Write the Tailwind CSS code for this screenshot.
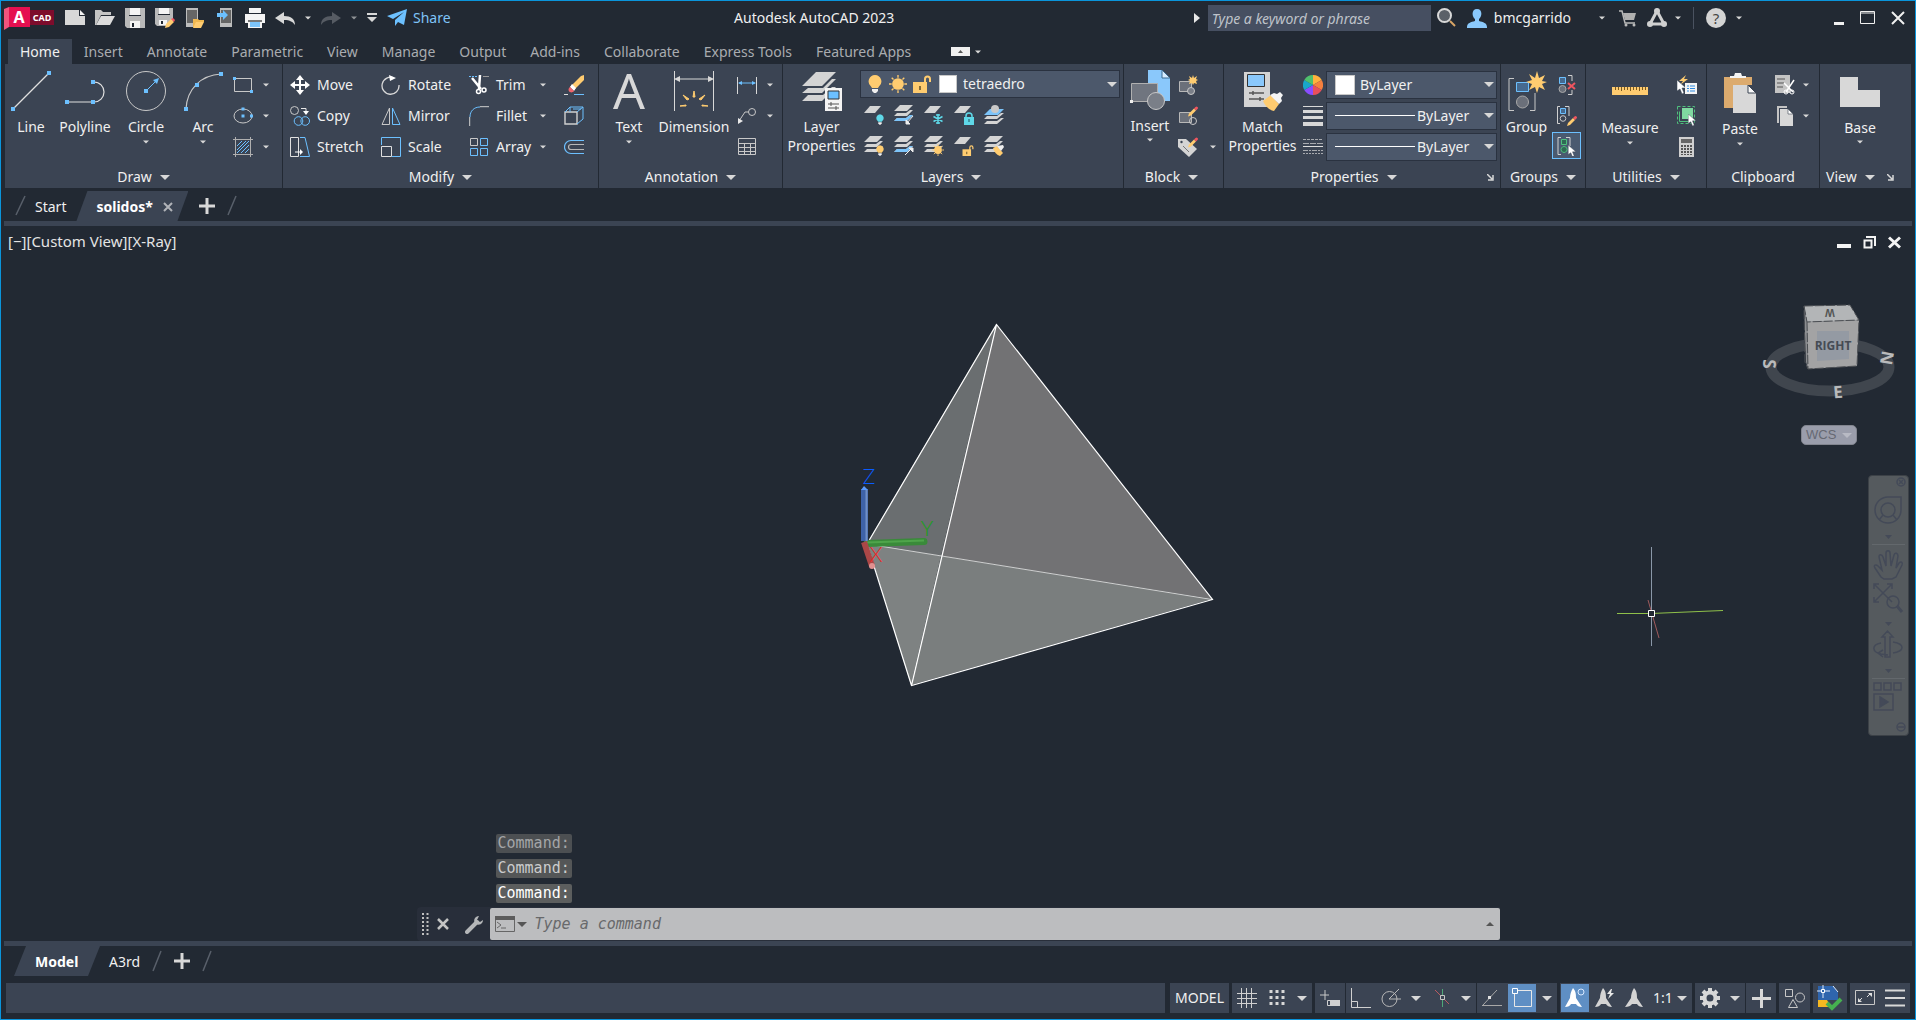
<!DOCTYPE html>
<html lang="en">
<head>
  <meta charset="UTF-8" />
  <title>Autodesk AutoCAD 2023</title>
  <script src="https://cdn.jsdelivr.net/npm/@tailwindcss/browser@4"></script>
</head>
<body class="bg-[#222933] font-['Noto_Sans','Open_Sans',sans-serif] text-[14px] leading-5 text-[#f0f0f0]">

  <!-- shared shapes -->
  <svg class="hidden">
    <symbol id="caret" viewBox="0 0 10 5"><path d="M0 0h10L5 5z" fill="#d8d8d8"/></symbol>
    <symbol id="sheets" viewBox="0 0 20 20"><path d="M6 0h13l-6 6H0zM3 8L0 11h13l6-6h-3l-4 3zM3 13L0 16h13l6-6h-3l-4 3z" fill="#d4d4d4"/></symbol>
    <symbol id="sheet" viewBox="0 0 20 20"><path d="M6 1h11l-6 7H0z" fill="#d4d4d4"/></symbol>
    <symbol id="bulb" viewBox="0 0 14 18"><path d="M7 0a6.500 6.500 0 0 1 4 11.500L10 13H4L3 11.500A6.500 6.500 0 0 1 7 0z" fill="currentColor"/><path d="M4 14h6v2l-2 2H6l-2-2z" fill="#f0f0f0"/></symbol>
    <symbol id="sun" viewBox="0 0 20 20"><circle cx="10" cy="10" r="6.500" fill="#ffcc70"/><path d="M10 0v3M10 17v3M0 10h3M17 10h3M3 3l2 2M15 15l2 2M17 3l-2 2M5 15l-2 2" stroke="#ffcc70" stroke-width="1.500"/></symbol>
    <symbol id="lock-open" viewBox="0 0 18 18"><path d="M12 8V4a2.500 2.500 0 0 1 5 0v3" fill="none" stroke="#ffcc70" stroke-width="2"/><path d="M0 7h14v11H0z" fill="#ffcc70"/><path d="M7 11v4" stroke="#5b4a25" stroke-width="1.500"/></symbol>
    <symbol id="cursor" viewBox="0 0 10 14"><path d="M0 0v11l3-2 2 5 2-1-2-5h4z" fill="#fff" stroke="#3b4453" stroke-width=".5"/></symbol>
    <symbol id="pencil" viewBox="0 0 10 10"><path d="M0 10l1-3 5-5 2 2-5 5z" fill="#ffcc70"/><path d="M6 2l1.500-1.500a1 1 0 0 1 2 2L8 4z" fill="#f0555f"/></symbol>
  </svg>

  <div class="flex h-screen min-h-[700px] w-full flex-col overflow-hidden border border-[#0a95dc] pb-1.5">

    <!-- Title bar -->
    <header class="flex h-[38px] shrink-0 items-center pb-1 pl-[3px] pr-2.5">
      <svg class="h-[23px] w-[50px] shrink-0 overflow-visible" viewBox="0 0 50 23">
        <path d="M0 2l5-2v20l-5 3z" fill="#f2547d"/><path d="M5 0h21v20H5z" fill="#e51050"/><path d="M26 3h24v15H26z" fill="#7d0c2c"/>
        <text x="15" y="16" text-anchor="middle" font-size="16" font-weight="700" fill="#fff">A</text>
        <text x="38" y="14" text-anchor="middle" font-size="9" font-weight="700" fill="#fff">CAD</text>
      </svg>
      <nav class="ml-[11px] flex items-center gap-2.5" aria-label="Quick access">
        <button aria-label="New"><svg class="size-5" viewBox="0 0 20 20"><path d="M0 2h14v6h6v9H0z" fill="#d8d8d8"/><path d="M15 2l5 5h-5z" fill="#f4f4f4"/></svg></button>
        <button aria-label="Open"><svg class="size-5" viewBox="0 0 20 20"><path d="M0 2h6l2 2h8v3H6L1 17H0z" fill="#c4c4c4"/><path d="M6 8h14l-5 9H1z" fill="#dcdcdc"/></svg></button>
        <button aria-label="Save"><svg class="size-5" viewBox="0 0 20 20"><path d="M0 0h20v20H2l-2-2z" fill="#b9b9b9"/><path d="M5 0h10v7H5z" fill="#f4f4f4"/><path d="M5 13h10v7H5z" fill="#f4f4f4"/><path d="M4 7h12v1H4zM7 15h2v4H7z" fill="#222933"/></svg></button>
        <button aria-label="Save as"><svg class="size-5" viewBox="0 0 20 20"><path d="M0 0h18v14l-4 4H2l-2-2z" fill="#b9b9b9"/><path d="M4 0h10v6H4z" fill="#f4f4f4"/><path d="M4 12h8v5H4z" fill="#f4f4f4"/><path d="M6 13h2v3H6zM3 6h12v1H3z" fill="#222933"/><path d="M10 20l1-4 5-5 3 3-5 5z" fill="#ffcc70"/><path d="M16 11l2-1 2 2-1 2z" fill="#f0555f"/></svg></button>
        <button aria-label="Open from mobile"><svg class="size-5" viewBox="0 0 20 20"><path d="M1 0h12v19H1z" fill="#bdbdbd"/><path d="M2 2h10v13H2z" fill="#666"/><path d="M8 11h5l1 1h5v2h-7l-4 6z" fill="#f0b850"/><path d="M11 14h8l-3 6H8z" fill="#ffcc70"/></svg></button>
        <button aria-label="Save to mobile"><svg class="size-5" viewBox="0 0 20 20"><path d="M5 0h12v19H5z" fill="#bdbdbd"/><path d="M6 2h10v13H6z" fill="#666"/><path d="M2 5h6V2l5 5-5 5V9H2z" fill="#6cc0ff"/></svg></button>
        <button aria-label="Plot"><svg class="size-5" viewBox="0 0 20 20"><path d="M4 0h12v5H4zM0 6h20v9H0z" fill="#f4f4f4"/><path d="M3 12h14v8H3z" fill="#f4f4f4"/><path d="M3 12h14v2H3z" fill="#777"/><path d="M5 14h10v5H5z" fill="#7cc4fa"/></svg></button>
        <button aria-label="Undo" class="flex items-center gap-2.5"><svg class="h-5 w-5" viewBox="0 0 20 20"><path d="M0 10l9-6v4c7 0 11 3 11 9-2-3-5-5-11-5v4z" fill="#d8d8d8"/></svg><svg class="h-1 w-1.5"><use href="#caret"/></svg></button>
        <button aria-label="Redo" class="flex items-center gap-2.5"><svg class="h-5 w-5" viewBox="0 0 20 20"><path d="M20 10l-9-6v4C4 8 0 11 0 17c2-3 5-5 11-5v4z" fill="#565b63"/></svg><svg class="h-1 w-1.5 opacity-60"><use href="#caret"/></svg></button>
        <button aria-label="Customize"><svg class="h-5 w-2.5" viewBox="0 0 10 20"><path d="M0 5h10v2H0zM0 9h10l-5 5z" fill="#d8d8d8"/></svg></button>
        <button class="flex items-center gap-1.5 text-[#7fc4f8]"><svg class="size-5" viewBox="0 0 20 20"><path d="M0 8L20 1 17 17l-6-3-3 4v-6l9-8L6 11z" fill="#6cc0ff"/></svg>Share</button>
      </nav>
      <h1 class="flex-1 pr-4 text-center">Autodesk AutoCAD 2023</h1>
      <svg class="mr-2 h-2.5 w-1.5" viewBox="0 0 6 10"><path d="M0 0l6 5-6 5z" fill="#e8e8e8"/></svg>
      <input type="text" aria-label="Search" placeholder="Type a keyword or phrase" class="h-[26px] w-[223px] bg-[#464f61] px-1 text-[14px] italic placeholder:text-[#bfc3ca]" />
      <button aria-label="Search" class="ml-1.5"><svg class="size-5" viewBox="0 0 20 20"><circle cx="7.500" cy="7.500" r="6.500" fill="#5b6068" stroke="#d8d8d8" stroke-width="2"/><path d="M13 13l5 5" stroke="#d9a566" stroke-width="2"/></svg></button>
      <button class="ml-2.5 flex items-center gap-[7px]"><svg class="size-5" viewBox="0 0 20 20"><path d="M10 1c6 0 5 8 2 10v2c4 1 8 2 8 6v1H0v-1c0-4 4-5 8-6v-2C5 9 4 1 10 1z" fill="#8ac8fb"/></svg>bmcgarrido</button>
      <svg class="ml-7 h-1 w-1.5"><use href="#caret"/></svg>
      <button aria-label="Store" class="ml-3.5"><svg class="h-5 w-[18px]" viewBox="0 0 18 20"><path d="M0 3h3l3 12h10" fill="none" stroke="#b9b9b9" stroke-width="1.500"/><path d="M4 5h13l-2 7H6z" fill="#b0b0b0"/><circle cx="7" cy="17" r="1.500" fill="#b9b9b9"/><circle cx="15" cy="17" r="1.500" fill="#b9b9b9"/></svg></button>
      <button aria-label="Autodesk App Store" class="ml-2.5 flex items-center gap-2"><svg class="size-5" viewBox="0 0 20 20"><path d="M10 3L3 16h14z" fill="none" stroke="#d0d0d0" stroke-width="3"/><g fill="#d0d0d0"><circle cx="10" cy="3" r="3"/><circle cx="3" cy="16" r="3"/><circle cx="17" cy="16" r="3"/></g></svg><svg class="h-1 w-1.5"><use href="#caret"/></svg></button>
      <span class="mx-3 h-[22px] w-px bg-[#4a5260]"></span>
      <button aria-label="Help" class="flex items-center gap-2.5"><span class="flex size-5 items-center justify-center rounded-full bg-[#d4d4d4] text-[15px] text-[#444]">?</span><svg class="h-1 w-1.5"><use href="#caret"/></svg></button>
      <div class="ml-[92px] flex items-center gap-4">
        <button aria-label="Minimize"><svg class="h-4 w-2.5"><path d="M0 12h10v3H0z" fill="#f0f0f0"/></svg></button>
        <button aria-label="Maximize"><svg class="h-4 w-[15px]"><path d="M.5 1.500h14v12H.5zM0 3h15" fill="none" stroke="#f0f0f0"/></svg></button>
        <button aria-label="Close"><svg class="h-4 w-[14px]"><path d="M1 2l12 12M13 2L1 14" stroke="#f0f0f0" stroke-width="2"/></svg></button>
      </div>
    </header>

    <!-- Ribbon tabs -->
    <nav class="flex h-[25px] shrink-0 items-center pl-[7px] text-[#a9acb0]">
      <a href="#" class="flex h-full items-center bg-[#3b4453] px-3 text-[#f0f0f0]">Home</a>
      <a href="#" class="px-3">Insert</a>
      <a href="#" class="px-3">Annotate</a>
      <a href="#" class="px-3">Parametric</a>
      <a href="#" class="px-3">View</a>
      <a href="#" class="px-3">Manage</a>
      <a href="#" class="px-3">Output</a>
      <a href="#" class="px-3">Add-ins</a>
      <a href="#" class="px-3">Collaborate</a>
      <a href="#" class="px-3">Express Tools</a>
      <a href="#" class="px-3">Featured Apps</a>
      <button aria-label="Minimize ribbon" class="ml-7 flex items-center gap-[5px]"><svg class="h-[9px] w-[19px]"><path d="M0 0h19v9H0z" fill="#f0f0f0"/><path d="M7 6h5l-2.500-3z" fill="#555"/></svg><svg class="h-1 w-1.5"><use href="#caret"/></svg></button>
    </nav>

    <!-- Ribbon -->
    <main class="mx-1 flex h-[124px] shrink-0 bg-[#3b4453]">

      <section class="flex w-[278px] shrink-0 flex-col border-r border-[#222933]">
        <div class="flex flex-1 pl-0.5 pt-[5px]">
          <button class="flex w-12 flex-col items-center pt-0.5"><svg class="size-10 shrink-0" viewBox="0 0 40 40"><path d="M2 38L38 2" stroke="#e0e0e0" stroke-width="1.200"/><path d="M0 36h4v4H0zM36 0h4v4h-4z" fill="#6cc0ff"/></svg><span class="mt-1.5">Line</span></button>
          <button class="flex w-[60px] flex-col items-center pt-0.5"><svg class="size-10 shrink-0" viewBox="0 0 40 40"><path d="M2 31h27a10 10 0 0 0 0-20" fill="none" stroke="#e0e0e0" stroke-width="1.200"/><path d="M0 29h4v4H0zM26 29h4v4h-4zM26 9h4v4h-4z" fill="#6cc0ff"/></svg><span class="mt-1.5">Polyline</span></button>
          <button class="flex w-[62px] flex-col items-center pt-0.5"><svg class="size-10 shrink-0" viewBox="0 0 40 40"><circle cx="20" cy="20" r="19.500" fill="none" stroke="#c8c8c8"/><path d="M20 20L31 9" stroke="#6cc0ff"/><path d="M18 18h4v4h-4zM33 7l-6 2 4 4z" fill="#6cc0ff"/></svg><span class="mt-1.5">Circle</span><svg class="mt-[3px] h-1 w-1.5"><use href="#caret"/></svg></button>
          <button class="flex w-[52px] flex-col items-center pt-0.5"><svg class="size-10 shrink-0" viewBox="0 0 40 40"><path d="M3 38C4 18 18 4 38 3" fill="none" stroke="#c8c8c8" stroke-width="1.200"/><path d="M1 36h4v4H1zM12 12h4v4h-4zM36 1h4v4h-4z" fill="#6cc0ff"/></svg><span class="mt-1.5">Arc</span><svg class="mt-[3px] h-1 w-1.5"><use href="#caret"/></svg></button>
          <div class="flex flex-col pl-1">
            <button aria-label="Rectangle" class="flex h-[31px] items-center gap-2.5"><svg class="size-5" viewBox="0 0 20 20"><path d="M1.500 3.500h17v13h-17z" fill="none" stroke="#c8c8c8"/><path d="M0 2h3v3H0zM17 15h3v3h-3z" fill="#6cc0ff"/></svg><svg class="h-1 w-1.5"><use href="#caret"/></svg></button>
            <button aria-label="Ellipse" class="flex h-[31px] items-center gap-2.5"><svg class="size-5" viewBox="0 0 20 20"><ellipse cx="10" cy="10" rx="9" ry="7" fill="none" stroke="#c8c8c8"/><path d="M8.500 1.500h3v3h-3zM8.500 8.500h3v3h-3zM17 8.500h3v3h-3z" fill="#6cc0ff"/></svg><svg class="h-1 w-1.5"><use href="#caret"/></svg></button>
            <button aria-label="Hatch" class="flex h-[31px] items-center gap-2.5"><svg class="size-5" viewBox="0 0 20 20"><path d="M0 2.500h20M0 17.500h20M2.500 0v20M17.500 0v20" stroke="#b0b0b0"/><path d="M4 9l5-5M4 13l9-9M4 16L16 4M8 16l8-8M12 16l4-4" stroke="#6cc0ff"/></svg><svg class="h-1 w-1.5"><use href="#caret"/></svg></button>
          </div>
        </div>
        <button class="flex h-[26px] items-center justify-center gap-2 pt-1">Draw <svg class="h-[5px] w-2.5"><use href="#caret"/></svg></button>
      </section>

      <section class="flex w-[316px] shrink-0 flex-col border-r border-[#222933]">
        <div class="grid flex-1 auto-rows-[31px] grid-cols-[91px_88px_95px_20px] pl-[7px] pt-[5px]">
          <button class="flex items-center gap-[7px]"><svg class="size-5" viewBox="0 0 20 20"><path d="M10 0l4 5h-3v4h4V6l5 4-5 4v-3h-4v4h3l-4 5-4-5h3v-4H5v3l-5-4 5-4v3h4V5H6z" fill="#fff"/></svg>Move</button>
          <button class="flex items-center gap-[7px]"><svg class="size-5" viewBox="0 0 20 20"><path d="M13 3a8.500 8.500 0 1 0 5 7" fill="none" stroke="#d8d8d8" stroke-width="1.300"/><path d="M8 0l7 3-6 3z" fill="#fff"/></svg>Rotate</button>
          <button class="flex items-center gap-[7px]"><svg class="size-5" viewBox="0 0 20 20"><path d="M0 1.500h9" stroke="#6cc0ff" stroke-dasharray="2 1"/><path d="M14 1.500h6" stroke="#999"/><path d="M3 3l9 11M11 0l-1 14" stroke="#fff" stroke-width="2.500"/><circle cx="9.500" cy="16.500" r="2" fill="none" stroke="#fff" stroke-width="1.500"/><circle cx="15" cy="15" r="2" fill="none" stroke="#fff" stroke-width="1.500"/></svg>Trim<svg class="ml-auto mr-[18px] h-1 w-1.5"><use href="#caret"/></svg></button>
          <button aria-label="Erase"><svg class="size-5" viewBox="0 0 20 20"><path d="M20 0v5L10 15l-4-3L17 1z" fill="#ffcc70"/><path d="M8 9l4 4-2 3-4-4z" fill="#fff"/><path d="M6 12l4 4c-2 3-7 1-5-3z" fill="#f0656c"/><path d="M0 19.500h4" stroke="#e0e0e0"/><path d="M10 19.500h10" stroke="#6cc0ff"/></svg></button>
          <button class="flex items-center gap-[7px]"><svg class="size-5" viewBox="0 0 20 20"><circle cx="4.500" cy="4.500" r="4" fill="none" stroke="#c8c8c8"/><path d="M11 2.500h5V6" fill="none" stroke="#e8e8e8"/><path d="M13 5h6l-3 4z" fill="#fff"/><circle cx="8.500" cy="15" r="4.300" fill="none" stroke="#6cc0ff"/><circle cx="15.200" cy="15" r="4.300" fill="none" stroke="#6cc0ff"/></svg>Copy</button>
          <button class="flex items-center gap-[7px]"><svg class="size-5" viewBox="0 0 20 20"><path d="M8.500 2v16.500H1z" fill="none" stroke="#c8c8c8"/><path d="M11.500 2v16.500H19z" fill="none" stroke="#6cc0ff"/></svg>Mirror</button>
          <button class="flex items-center gap-[7px]"><svg class="size-5" viewBox="0 0 20 20"><path d="M1 11C1 5 5 1 11 1" fill="none" stroke="#6cc0ff"/><path d="M.7 11v9M11 .7h9" stroke="#d0d0d0"/></svg>Fillet<svg class="ml-auto mr-[18px] h-1 w-1.5"><use href="#caret"/></svg></button>
          <button aria-label="Solid"><svg class="size-5" viewBox="0 0 20 20"><path d="M1 6h12v12H1z" fill="none" stroke="#d0d0d0" stroke-width="1.400"/><path d="M1 6l5-5h13v12l-6 5M13 6l6-5M6 1v5M9 3h8" fill="none" stroke="#6cc0ff"/></svg></button>
          <button class="flex items-center gap-[7px]"><svg class="size-5" viewBox="0 0 20 20"><path d="M.5.5h8v19h-8z" fill="none" stroke="#e0e0e0"/><path d="M10 .5h5l4.500 19H10" fill="none" stroke="#6cc0ff"/><path d="M5 15h6" stroke="#fff"/><path d="M10 12l3 3-3 3z" fill="#fff"/></svg>Stretch</button>
          <button class="flex items-center gap-[7px]"><svg class="size-5" viewBox="0 0 20 20"><path d="M.5 8V.500h19v19H11" fill="none" stroke="#6cc0ff"/><path d="M.5 9.500h10v10H.5z" fill="none" stroke="#e0e0e0"/></svg>Scale</button>
          <button class="flex items-center gap-[7px]"><svg class="size-5" viewBox="0 0 20 20"><path d="M1.500 1.500h7v7h-7z" fill="none" stroke="#c8c8c8"/><path d="M11.500 1.500h7v7h-7zM1.500 11.500h7v7h-7zM11.500 11.500h7v7h-7z" fill="none" stroke="#6cc0ff"/></svg>Array<svg class="ml-auto mr-[18px] h-1 w-1.5"><use href="#caret"/></svg></button>
          <button aria-label="Offset"><svg class="size-5" viewBox="0 0 20 20"><path d="M20 3.500H7a6.500 6.500 0 0 0 0 13h13" fill="none" stroke="#6cc0ff" stroke-width="1.200"/><path d="M20 7.500H7a2.500 2.500 0 0 0 0 5h13" fill="none" stroke="#b8b8b8" stroke-width="1.200"/></svg></button>
        </div>
        <button class="flex h-[26px] items-center justify-center gap-2 pt-1">Modify <svg class="h-[5px] w-2.5"><use href="#caret"/></svg></button>
      </section>

      <section class="flex w-[184px] shrink-0 flex-col border-r border-[#222933]">
        <div class="flex flex-1 pl-1 pt-[5px]">
          <button class="flex w-[52px] flex-col items-center pt-0.5"><svg class="size-10 shrink-0 overflow-visible" viewBox="0 0 40 40"><text x="20" y="38" text-anchor="middle" font-size="50" fill="#d8d8d8">A</text></svg><span class="mt-1.5">Text</span><svg class="mt-[3px] h-1 w-1.5"><use href="#caret"/></svg></button>
          <button class="flex w-[78px] flex-col items-center pt-0.5"><svg class="size-10 shrink-0" viewBox="0 0 40 40"><path d="M.5 0v40M39.500 0v40M2 8h36" stroke="#d8d8d8"/><path d="M0 8l6-3v6zM40 8l-6-3v6z" fill="#d8d8d8"/><path d="M19 26l1-6 1 6zM13 29l-4-5 6 4zM27 29l4-5-6 4zM6 35l6-1v1zM34 35l-6-1v1z" fill="#ffcc70" stroke="#ffcc70"/></svg><span class="mt-1.5">Dimension</span></button>
          <div class="flex flex-col pl-1">
            <button aria-label="Linear" class="flex h-[31px] items-center gap-2.5"><svg class="size-5" viewBox="0 0 20 20"><path d="M.5 2v17M19.500 2v17" stroke="#d8d8d8"/><path d="M2 8h16" stroke="#6cc0ff"/><path d="M1 8l4-2v4zM19 8l-4-2v4z" fill="#6cc0ff"/></svg><svg class="h-1 w-1.5"><use href="#caret"/></svg></button>
            <button aria-label="Leader" class="flex h-[31px] items-center gap-2.5"><svg class="size-5" viewBox="0 0 20 20"><circle cx="15" cy="6" r="3.500" fill="none" stroke="#c8c8c8"/><path d="M11.500 6H8l-6 9" fill="none" stroke="#c8c8c8"/><path d="M1 12l5 3-5 3z" fill="#e8e8e8"/></svg><svg class="h-1 w-1.5"><use href="#caret"/></svg></button>
            <button aria-label="Table" class="flex h-[31px] items-center"><svg class="size-5" viewBox="0 0 20 20"><path d="M1.500 1.500h17v16h-17zM1 6.500h18M1 10.500h18M1 14.500h18M7.500 6v11M13.500 6v11" fill="none" stroke="#c8c8c8"/></svg></button>
          </div>
        </div>
        <button class="flex h-[26px] items-center justify-center gap-2 pt-1">Annotation <svg class="h-[5px] w-2.5"><use href="#caret"/></svg></button>
      </section>

      <section class="flex w-[341px] shrink-0 flex-col border-r border-[#222933]">
        <div class="flex flex-1 pt-[5px]">
          <button class="flex w-[77px] flex-col items-center pt-0.5"><svg class="size-10 shrink-0" viewBox="0 0 40 40"><path d="M14 1h20L20 15H0zM6 17l-6 5h20L34 8h-4L21 17zM6 24l-6 6h20l14-14h-4l-9 8z" fill="#d4d4d4"/><path d="M23 17h17v23H23z" fill="#f4f4f4"/><path d="M26 20h11v8H26z" fill="#6cc0ff" stroke="#333"/><path d="M26 33h11M26 37h11M29 31v4M34 35v4" stroke="#555"/></svg><span class="mt-1.5">Layer</span><span class="-mt-px">Properties</span></button>
          <div class="flex flex-col pt-px">
            <label class="flex h-7 w-[260px] items-center border border-[#2a3240] bg-[#4c586b] pl-[7px] pr-0.5">
              <svg class="h-[18px] w-[14px] text-[#ffcc70]"><use href="#bulb"/></svg>
              <svg class="ml-[7px] size-[18px]"><use href="#sun"/></svg>
              <svg class="ml-1.5 size-[18px]"><use href="#lock-open"/></svg>
              <span class="ml-2 size-[18px] border border-[#c8c8c8] bg-white"></span>
              <select aria-label="Layer" class="ml-1.5 flex-1 appearance-none bg-transparent"><option>tetraedro</option></select>
              <svg class="h-[5px] w-2.5"><use href="#caret"/></svg>
            </label>
            <div class="flex h-[34px] items-center gap-2.5 pl-1">
              <button aria-label="Off"><svg class="size-5"><use href="#sheet"/><use href="#bulb" x="12" y="9" width="8" height="11" color="#5fd8e8"/></svg></button>
              <button aria-label="Isolate"><svg class="size-5"><use href="#sheets"/><path d="M3 13l-3 3h13l6-6h-3l-4 3z" fill="#7cc4fa"/><path d="M19 11l-6 7M12 15v4h4z" stroke="#eee" fill="#eee"/></svg></button>
              <button aria-label="Freeze"><svg class="size-5"><use href="#sheet"/><path d="M14 9v10M9.500 11.500l9 5M9.500 16.500l9-5M12 10h4M12 18h4" stroke="#5fd8e8" stroke-width="1.500"/></svg></button>
              <button aria-label="Lock"><svg class="size-5"><use href="#sheet"/><path d="M12 13v-2a3 3 0 0 1 6 0v2" fill="none" stroke="#5fd8e8" stroke-width="1.500"/><path d="M10 12h10v8H10z" fill="#5fd8e8"/><path d="M15 14v3" stroke="#24505a"/></svg></button>
              <button aria-label="Make current"><svg class="size-5"><path d="M6 4h14l-6 6H0z" fill="#7cc4fa"/><path d="M3 11l-3 3h13l7-6h-3l-4 3zM3 16l-3 3h13l7-6h-3l-4 3z" fill="#d4d4d4"/><circle cx="11" cy="4" r="4" fill="#c8c8c8"/></svg></button>
            </div>
            <div class="flex h-7 items-center gap-2.5 pl-1">
              <button aria-label="All on"><svg class="size-5"><use href="#sheets"/><use href="#bulb" x="12" y="9" width="8" height="11" color="#ffcc70"/></svg></button>
              <button aria-label="Unisolate"><svg class="size-5"><use href="#sheets"/><path d="M3 13l-3 3h13l6-6h-3l-4 3z" fill="#7cc4fa"/><path d="M11 19l7-7M15 12h4v4z" stroke="#eee" fill="#eee"/></svg></button>
              <button aria-label="Thaw"><svg class="size-5"><use href="#sheets"/><use href="#sun" x="8" y="8" width="12" height="12"/></svg></button>
              <button aria-label="Unlock"><svg class="size-5"><use href="#sheet"/><use href="#lock-open" x="8" y="9" width="12" height="11"/></svg></button>
              <button aria-label="Match layer"><svg class="size-5"><use href="#sheets"/><path d="M9 12l4-2 6 7-3 3c-3-1-6-4-7-8z" fill="#ffcc70"/><path d="M13 10l6-1 1 2-3 4z" fill="#f0f0f0"/></svg></button>
            </div>
          </div>
        </div>
        <button class="flex h-[26px] items-center justify-center gap-2 pr-1 pt-1">Layers <svg class="h-[5px] w-2.5"><use href="#caret"/></svg></button>
      </section>

      <section class="flex w-[100px] shrink-0 flex-col border-r border-[#222933]">
        <div class="flex flex-1 pt-[5px]">
          <button class="flex w-[52px] flex-col items-center pt-px"><svg class="size-10 shrink-0" viewBox="0 0 40 40"><path d="M18 0h14l8 8v23H18z" fill="#8ac8fb"/><path d="M32 0v8h8z" fill="#d6ecff" stroke="#3b6a90"/><path d="M1.500 13.500h26v18h-26z" fill="#70757f" stroke="#b0b0b0"/><circle cx="26" cy="31" r="8.500" fill="#7a7f88" stroke="#c8c8c8"/><path d="M0 30h3v3H0z" fill="#eee"/></svg><span class="mt-1.5">Insert</span><svg class="mt-0.5 h-1 w-1.5"><use href="#caret"/></svg></button>
          <div class="flex flex-col pl-0.5">
            <button aria-label="Create block" class="flex h-[31px] items-center"><svg class="size-5"><path d="M1.500 6.500h12v10h-12z" fill="#6b707a" stroke="#b8b8b8"/><circle cx="13" cy="16" r="3.500" fill="#7a7f88" stroke="#c8c8c8"/><path d="M15 0l1 3 3-2-1 3 2 1-2 1 1 3-3-1-1 2-1-2-3 1 1-3-2-1 2-1-1-3 3 2z" fill="#ffcc70"/></svg></button>
            <button aria-label="Edit block" class="flex h-[31px] items-center"><svg class="size-5"><path d="M1.500 6.500h12v10h-12z" fill="#6b707a" stroke="#b8b8b8"/><circle cx="15" cy="15" r="3.500" fill="none" stroke="#c8c8c8"/><use href="#pencil" x="10" y="0" width="10" height="11"/></svg></button>
            <button aria-label="Edit attributes" class="flex h-[31px] items-center gap-3"><svg class="size-5"><path d="M0 2l8 0 11 10-8 8L0 10z" fill="#d4d4d4"/><path d="M5 9l6 6" stroke="#777"/><circle cx="3.500" cy="5" r="1.200" fill="#3b4453"/><use href="#pencil" x="10" y="0" width="10" height="11"/></svg><svg class="h-1 w-1.5"><use href="#caret"/></svg></button>
          </div>
        </div>
        <button class="flex h-[26px] items-center justify-center gap-2 pr-1 pt-1">Block <svg class="h-[5px] w-2.5"><use href="#caret"/></svg></button>
      </section>

      <section class="flex w-[277px] shrink-0 flex-col border-r border-[#222933]">
        <div class="flex flex-1 pt-[5px]">
          <button class="flex w-[77px] flex-col items-center pt-0.5"><svg class="size-10 shrink-0" viewBox="0 0 40 40"><path d="M1 1h26v35H1z" fill="#d4d4d4"/><path d="M4.500 3.500h17v12h-17z" fill="#8ac8fb" stroke="#333"/><path d="M6 22h15M6 28h15M10 20v4M17 26v4" stroke="#555" stroke-width="1.500"/><path d="M20 30l8-6 8 9-5 7c-5-1-9-5-11-10z" fill="#ffcc70"/><path d="M27 24l4-2 3 1 3-2 3 3-2 3 1 3-3 3z" fill="#f4f4f4"/></svg><span class="mt-1.5">Match</span><span class="-mt-px">Properties</span></button>
          <div class="grid grid-cols-[23px_171px] auto-rows-[31px] items-center pl-0.5">
            <svg class="size-5" viewBox="-10 -10 20 20"><path d="M0 0V-10A10 10 0 0 1 8.700-5z" fill="#ffb13d"/><path d="M0 0l8.700-5a10 10 0 0 1 0 10z" fill="#f5803e"/><path d="M0 0l8.700 5A10 10 0 0 1 0 10z" fill="#e8505b"/><path d="M0 0v10a10 10 0 0 1-8.700-5z" fill="#8a4dff"/><path d="M0 0l-8.700 5a10 10 0 0 1 0-10z" fill="#19a7c9"/><path d="M0 0l-8.700-5A10 10 0 0 1 0-10z" fill="#4fc06d"/></svg>
            <label class="flex h-7 items-center border border-[#2a3240] bg-[#4c586b] pl-2 pr-0.5"><span class="size-5 border border-[#c8c8c8] bg-white"></span><select aria-label="Object color" class="ml-[5px] flex-1 appearance-none bg-transparent"><option>ByLayer</option></select><svg class="h-[5px] w-2.5"><use href="#caret"/></svg></label>
            <svg class="size-5"><path d="M0 0h20v1H0zM0 4h20v3H0zM0 10h20v3H0zM0 16h20v4H0z" fill="#d8d8d8"/></svg>
            <label class="flex h-7 items-center border border-[#2a3240] bg-[#4c586b] pl-2 pr-0.5"><span class="h-px w-20 bg-white"></span><select aria-label="Lineweight" class="ml-0.5 flex-1 appearance-none bg-transparent"><option>ByLayer</option></select><svg class="h-[5px] w-2.5"><use href="#caret"/></svg></label>
            <svg class="size-5" stroke="#a8abb0"><path d="M0 2.500h20" stroke-dasharray="3 1"/><path d="M0 6.500h20" stroke-dasharray="6 1"/><path d="M0 9.500h20" stroke="#ddd"/><path d="M0 13.500h20" stroke-dasharray="5 1 2 1"/><path d="M0 16.500h20" stroke-dasharray="2 1"/></svg>
            <label class="flex h-7 items-center border border-[#2a3240] bg-[#4c586b] pl-2 pr-0.5"><span class="h-px w-20 bg-white"></span><select aria-label="Linetype" class="ml-0.5 flex-1 appearance-none bg-transparent"><option>ByLayer</option></select><svg class="h-[5px] w-2.5"><use href="#caret"/></svg></label>
          </div>
        </div>
        <div class="flex h-[26px] items-center pr-1.5 pt-1">
          <button class="flex flex-1 items-center justify-center gap-2 pr-1">Properties <svg class="h-[5px] w-2.5"><use href="#caret"/></svg></button>
          <button aria-label="Open properties"><svg class="size-[7px]"><path d="M0 0l5 5M6 1v5H1" fill="none" stroke="#d8d8d8" stroke-width="1.500"/></svg></button>
        </div>
      </section>

      <section class="flex w-[85px] shrink-0 flex-col border-r border-[#222933]">
        <div class="flex flex-1 pt-[5px]">
          <button class="flex w-[51px] flex-col items-center pt-0.5"><svg class="size-10 shrink-0" viewBox="0 0 40 40"><path d="M7 7.500H2v32h5M23 39.500h5V22" fill="none" stroke="#c8c8c8"/><path d="M9.500 11.500h12v9h-12z" fill="#466a8f" stroke="#6cc0ff"/><circle cx="15.500" cy="31" r="6" fill="#6b707a" stroke="#a8a8a8"/><path d="M30 0l2 7 6-3-3 6 5 1-5 2 3 6-6-3-2 6-2-6-6 3 3-6-6-2 6-2-3-6 6 4z" fill="#ffcc70"/></svg><span class="mt-1.5">Group</span></button>
          <div class="flex flex-col items-center">
            <button aria-label="Ungroup" class="flex h-[31px] items-center"><svg class="size-5"><path d="M2.500 2.500h6v6h-6z" fill="#466a8f" stroke="#6cc0ff"/><circle cx="5.500" cy="14" r="3.500" fill="#6b707a" stroke="#a8a8a8"/><path d="M11 .5h4V6M11 19.500h4V15" fill="none" stroke="#d0d0d0"/><path d="M11 8l7 6M18 8l-7 6" stroke="#f0555f" stroke-width="2"/></svg></button>
            <button aria-label="Group edit" class="flex h-[31px] items-center"><svg class="size-5"><path d="M3 .5H.5v17H3M8 .5h4V10" fill="none" stroke="#d0d0d0"/><path d="M3.500 2.500h5v5h-5z" fill="#466a8f" stroke="#6cc0ff"/><circle cx="6" cy="12.500" r="2.800" fill="none" stroke="#c8c8c8"/><use href="#pencil" x="10" y="10" width="10" height="10"/></svg></button>
            <button aria-label="Group selection" aria-pressed="true" class="mt-px flex h-[27px] w-[29px] items-center justify-center border border-[#6cc0ff] bg-[#4a5a70]"><svg class="size-5"><path d="M4 1.500H1v17h3M9 1.500h4V10" fill="none" stroke="#d0d0d0"/><path d="M4.500 3.500h5v5h-5zM7 10.500a3 3 0 1 0 .1 0" fill="#2f6a55" stroke="#4fc07d"/><use href="#cursor" x="11" y="9" width="9" height="12"/></svg></button>
          </div>
        </div>
        <button class="flex h-[26px] items-center justify-center gap-2 pt-1">Groups <svg class="h-[5px] w-2.5"><use href="#caret"/></svg></button>
      </section>

      <section class="flex w-[121px] shrink-0 flex-col border-r border-[#222933]">
        <div class="flex flex-1 pt-[5px]">
          <button class="flex w-[88px] flex-col items-center pt-[3px]"><svg class="size-10 shrink-0" viewBox="0 0 40 40"><path d="M2 15h36v8H2z" fill="#ffcc70"/><path d="M5.500 15v3M8.500 15v3M11.500 15v4M14.500 15v3M17.500 15v3M20.500 15v4M23.500 15v3M26.500 15v3M29.500 15v4M32.500 15v3M35.500 15v3" stroke="#7a5a20"/></svg><span class="mt-1.5">Measure</span><svg class="mt-[3px] h-1 w-1.5"><use href="#caret"/></svg></button>
          <div class="flex flex-col pl-[3px]">
            <button aria-label="Quick select" class="flex h-[31px] items-center"><svg class="size-5"><path d="M9 0L2 6h4l-3 4 8-6H7z" fill="#ffcc70"/><use href="#cursor" x="0" y="5" width="10" height="14"/><path d="M8 8h12v11H8z" fill="#f4f4f4"/><path d="M10 11h2M10 13.500h2M10 16h2M13 11h5M13 13.500h5M13 16h5" stroke="#2f8be0"/></svg></button>
            <button aria-label="Select all" class="flex h-[31px] items-center"><svg class="size-5"><path d="M.5.5h17v17H.5z" fill="none" stroke="#4fc07d" stroke-dasharray="3 2"/><path d="M5 2h11v11H5z" fill="#7fd8a0"/><path d="M2.500 5.500v10h10" fill="none" stroke="#4fc07d"/><use href="#cursor" x="11" y="8" width="9" height="12"/></svg></button>
            <button aria-label="Calculator" class="flex h-[31px] items-center"><svg class="size-5"><path d="M2 0h15v20H2z" fill="#d0d0d0"/><path d="M4 2h11v4H4z" fill="#666"/><path d="M5 8v10M8 8v10M11 8v10M14 8v10" stroke="#555" stroke-width="2" stroke-dasharray="2 1"/></svg></button>
          </div>
        </div>
        <button class="flex h-[26px] items-center justify-center gap-2 pt-1">Utilities <svg class="h-[5px] w-2.5"><use href="#caret"/></svg></button>
      </section>

      <section class="flex w-[113px] shrink-0 flex-col border-r border-[#222933]">
        <div class="flex flex-1 pt-[5px]">
          <button class="flex w-[66px] flex-col items-center pt-1"><svg class="size-10 shrink-0" viewBox="0 0 40 40"><path d="M4 4h28v8H13v23H4z" fill="#dcab6e"/><path d="M10 5V3h4l1-3h6l1 3h4v2z" fill="#f4f4f4"/><path d="M13 12h15l8 8v20H13z" fill="#d8d8d8"/><path d="M28 12v8h8z" fill="#f8f8f8" stroke="#3b4453"/></svg><span class="mt-1.5">Paste</span><svg class="mt-[3px] h-1 w-1.5"><use href="#caret"/></svg></button>
          <div class="flex flex-col pl-0.5">
            <button aria-label="Cut" class="flex h-[31px] items-center gap-2"><svg class="size-5"><path d="M0 0h15v18H0z" fill="#c4c4c4"/><path d="M2 4h8M2 8h7M2 12h6" stroke="#555"/><path d="M9 8l9 9M19 5l-8 12" stroke="#fff" stroke-width="1.500"/><circle cx="11" cy="17" r="2" fill="none" stroke="#fff"/><circle cx="17" cy="17" r="2" fill="none" stroke="#fff"/></svg><svg class="h-1 w-1.5"><use href="#caret"/></svg></button>
            <button aria-label="Copy clip" class="flex h-[31px] items-center gap-2"><svg class="size-5"><path d="M2 0h10v2H4v15H2z" fill="#c4c4c4"/><path d="M5 3h8l5 5v12H5z" fill="#d8d8d8"/><path d="M13 3v5h5z" fill="#fff" stroke="#3b4453" stroke-width=".6"/></svg><svg class="h-1 w-1.5"><use href="#caret"/></svg></button>
          </div>
        </div>
        <span class="flex h-[26px] items-center justify-center pt-1">Clipboard</span>
      </section>

      <section class="flex min-w-[92px] flex-1 flex-col">
        <div class="flex flex-1 pt-[5px]">
          <button class="flex w-20 flex-col items-center pt-[3px]"><svg class="size-10 shrink-0" viewBox="0 0 40 40"><path d="M0 5h18v13h22v17H0z" fill="#d8d8d8"/></svg><span class="mt-1.5">Base</span><svg class="mt-0.5 h-1 w-1.5"><use href="#caret"/></svg></button>
        </div>
        <div class="flex h-[26px] items-center gap-3 pl-1.5 pt-1">
          <button class="flex items-center gap-2">View <svg class="h-[5px] w-2.5"><use href="#caret"/></svg></button>
          <button aria-label="Open view"><svg class="size-[7px]"><path d="M0 0l5 5M6 1v5H1" fill="none" stroke="#d8d8d8" stroke-width="1.500"/></svg></button>
        </div>
      </section>
    </main>

    <!-- Drawing tabs -->
    <nav class="flex h-[33px] shrink-0 items-end pl-[14px]">
      <svg class="h-[30px] w-5"><path d="M1 24l9-19" stroke="#59606b" stroke-width="1.500"/></svg>
      <a href="#" class="flex h-[30px] items-center pt-px">Start</a>
      <a href="#" class="ml-2.5 flex h-[30px] w-[112px] items-center gap-2.5 bg-[#3b4453] pl-5 pt-px font-bold text-white [clip-path:polygon(11px_0,100%_0,calc(100%-11px)_100%,0_100%)]">solidos* <svg class="size-2.5 shrink-0"><path d="M1 1l8 8M9 1L1 9" stroke="#b0b3b8" stroke-width="2"/></svg></a>
      <button aria-label="New drawing" class="ml-[11px] flex h-[30px] items-center"><svg class="size-4"><path d="M8 0v16M0 8h16" stroke="#d8d8d8" stroke-width="3"/></svg></button>
      <svg class="ml-3 h-[30px] w-3"><path d="M1 24l8-19" stroke="#59606b" stroke-width="1.500"/></svg>
    </nav>
    <div class="mx-[3px] h-[5px] shrink-0 bg-[#3b4453]"></div>

    <!-- Viewport -->
    <section class="relative min-h-0 flex-1 overflow-hidden">
      <svg class="absolute inset-0 h-full w-full" viewBox="1 226 1914 715">
        <path d="M996 324L867 543 941 556z" fill="#6a6e70"/>
        <path d="M996 324L941 556 1212 599z" fill="#727274"/>
        <path d="M867 543L941 556 911 685z" fill="#7e8282"/>
        <path d="M941 556L1212 599 911 685z" fill="#7a7e7e"/>
        <path d="M867 544L1212 599.500" stroke="#cfd0d0"/>
        <path d="M996.500 324.500L867 544 911.500 685.500 1212.500 599.500zL911.500 685.500" fill="none" stroke="#fff" stroke-width="1.200"/>
        <!-- UCS axes -->
        <path d="M867 543.500l57-2" stroke="#3a8a3a" stroke-width="7" stroke-linecap="round"/><path d="M867 542.500l57-2" stroke="#4fa54b" stroke-width="2"/>
        <path d="M864.500 541v-52" stroke="#3e62a8" stroke-width="7"/><path d="M866.500 541v-51" stroke="#7090c8" stroke-width="2"/><path d="M861 490l3-4 4 4z" fill="#5a9aff"/>
        <path d="M864 542l8 24" stroke="#ab4747" stroke-width="6"/><circle cx="872" cy="566" r="3" fill="#e09090"/>
        <g font-size="21" text-anchor="middle" font-family="Lato, sans-serif" font-weight="300">
          <text x="869" y="484" fill="#0a5cff">Z</text><text x="927" y="536" fill="#17a017">Y</text><text x="876" y="562" fill="#f02828">X</text>
        </g>
        <!-- crosshair -->
        <path d="M1651.500 547v99" stroke="#8a97a8"/><path d="M1617 613.500h34l72-3" fill="none" stroke="#8fc04a"/><path d="M1648 600l11 38" stroke="#a05a5c"/>
        <path d="M1648.500 610.500h6v6h-6z" fill="#222933" stroke="#fff"/>
        <!-- view cube -->
        <ellipse cx="1830" cy="367" rx="59" ry="24" fill="none" stroke="#40464e" stroke-width="11"/>
        <path d="M1804 306L1850 305 1859 320 1807 322z" fill="#b3b5b7"/><path d="M1804 306L1807 322 1808 369 1806 362z" fill="#8b8d90"/><path d="M1807 322L1859 320 1857 366 1808 369z" fill="#a3a3a4"/>
        <path d="M1817 331h32v28l-32 2z" fill="#949aa3"/>
        <path d="M1804 306L1850 305 1859 320 1857 366 1808 369 1805 362zL1807 322 1859 320M1807 322l1 47" fill="none" stroke="#4b4e53" stroke-dasharray="9 2"/>
        <g font-family="'Open Sans', sans-serif" font-weight="700" text-anchor="middle">
          <text x="1833" y="350" font-size="12" fill="#454b54">RIGHT</text>
          <text x="1830" y="309" font-size="10" fill="#555" transform="rotate(180 1830 309)">W</text>
          <g fill="#b9babb" font-size="17">
            <text x="1769" y="370" transform="rotate(90 1769 364)">S</text>
            <text x="1887" y="364" transform="rotate(-80 1887 358)">N</text>
            <text x="1838" y="398" transform="rotate(-5 1838 393)">E</text>
          </g>
        </g>
      </svg>

      <div class="relative flex items-start justify-between pl-[7px] pr-[14px] pt-[5px]">
        <span class="text-[15px] text-[#e4e4e4]">[−][Custom View][X-Ray]</span>
        <div class="flex items-center gap-3 pt-1">
          <button aria-label="Minimize viewport"><svg class="h-3.5 w-[14px]"><path d="M0 9h14v4H0z" fill="#f4f4f4"/></svg></button>
          <button aria-label="Restore viewport"><svg class="size-[13px]"><path d="M3 1h9v9M1.500 4.500h7v7h-7z" fill="none" stroke="#f4f4f4" stroke-width="2"/></svg></button>
          <button aria-label="Close viewport"><svg class="size-[13px]"><path d="M1 1.500l11 10M12 1.500l-11 10" stroke="#f4f4f4" stroke-width="3"/></svg></button>
        </div>
      </div>

      <button class="absolute right-[58px] top-[199px] flex h-5 w-14 items-center justify-between rounded-[5px] border border-[#82858f] bg-[#9a9dab] px-1 font-['Liberation_Sans',sans-serif] text-[13px] text-[#666973]">WCS <svg class="h-[5px] w-2.5"><path d="M0 0h10L5 5z" fill="#b8bac4"/></svg></button>

      <!-- Navigation bar -->
      <div class="absolute right-[6px] top-[249px] flex h-[261px] w-[41px] flex-col items-center rounded-[4px] border border-[#3c4147] bg-[#555a5e]">
        <svg class="w-[39px] flex-1" viewBox="0 0 39 259" fill="none" stroke="#444a58" stroke-width="1.500">
          <circle cx="32" cy="6" r="4"/><path d="M30 4l4 4M34 4l-4 4"/>
          <path d="M19 21h13v13a13 13 0 1 1-13-13z"/><circle cx="19" cy="34" r="7"/><path d="M14 39l-4 5M24 39l4 5"/>
          <path d="M16 59h7l-3.500 4zM16 146h7l-3.500 4zM16 193h7l-3.500 4z" fill="#444a58" stroke="none"/>
          <path d="M3 68.500h33M3 202.500h33" stroke="#63686c" stroke-width="1"/>
          <path d="M12 101l-6-9c-2-3 1-4 3-2l4 4-3-13c0-3 3-3 4 0l3 9 0-13c0-3 4-3 4 0l1 13 3-11c1-3 4-2 4 1l-2 12 3-5c2-2 4-1 3 2l-6 12-4 2h-8z"/>
          <path d="M5 108l18 18M23 108L5 126M5 113v-5h5M18 108h5v5M5 121v5h5"/><circle cx="24" cy="126" r="6"/><path d="M28 130l5 6" stroke-width="3"/>
          <path d="M16 181v-20h-3l5.500-6 5.500 6h-3v20zM12 167c-10 2-9 9 0 11l7 1M24 166c12 2 12 9 0 11M14 174l-5 3 5 4"/>
          <path d="M5 207h7v7H5zM15 207h7v7h-7zM25 207h7v7h-7zM5 218h19v16H5z"/><path d="M11 221l8 5-8 5z" fill="#444a58"/>
          <circle cx="32" cy="251" r="4"/><path d="M29 251h6"/>
        </svg>
      </div>

      <!-- Command line -->
      <div class="absolute inset-x-0 bottom-0 flex justify-center">
        <div class="w-[1083px] font-['DejaVu_Sans_Mono',monospace] text-[15px]">
          <div class="flex flex-col items-start gap-1.5 pb-1 pl-[79px]">
            <p class="h-[19px] rounded-[2px] bg-[#4c4f52] px-0.5 leading-[19px] text-[#a4a6a8]">Command:</p>
            <p class="h-[19px] rounded-[2px] bg-[#545657] px-0.5 leading-[19px] text-[#cbcccd]">Command:</p>
            <p class="h-[19px] rounded-[2px] bg-[#5c5e5e] px-0.5 leading-[19px] text-white">Command:</p>
          </div>
          <div class="flex h-[34px] items-center rounded-l-[4px] bg-[#282e3a]">
            <svg class="ml-[5px] h-[22px] w-[7px]"><path d="M1 0v22M5.500 0v22" stroke="#c0c0c0" stroke-width="2" stroke-dasharray="2 2"/></svg>
            <button aria-label="Close command line" class="ml-2"><svg class="size-3"><path d="M1 1l10 10M11 1L1 11" stroke="#c4c4c4" stroke-width="2.500"/></svg></button>
            <button aria-label="Customize command line" class="ml-4"><svg class="size-[19px]"><path d="M2 17l10-10" stroke="#b4b6b8" stroke-width="4" stroke-linecap="round"/><path d="M14 1c-4 0-6 4-4 7s8 2 8-3l-3 2-3-2z" fill="#b4b6b8"/></svg></button>
            <label class="ml-1.5 flex h-8 flex-1 items-center rounded-[2px] bg-[#bcbdbf] pl-[5px] pr-1.5">
              <svg class="h-4 w-5"><path d="M.5.5h19v15H.5z" fill="none" stroke="#666"/><path d="M0 0h20v4H0z" fill="#5c5c5c"/><path d="M2 6l4 3-4 3M6 12h5" fill="none" stroke="#666"/></svg>
              <svg class="ml-0.5 h-[5px] w-2.5"><path d="M0 0h10L5 5z" fill="#555"/></svg>
              <input type="text" aria-label="Command" placeholder="Type a command" class="ml-2 flex-1 bg-transparent italic text-[#333] placeholder:text-[#68696b]" />
              <svg class="h-1 w-2"><path d="M0 4h8L4 0z" fill="#555"/></svg>
            </label>
          </div>
        </div>
      </div>
    </section>

    <!-- Layout tabs -->
    <div class="mx-[3px] h-[5px] shrink-0 bg-[#3b4453]"></div>
    <nav class="flex h-[37px] shrink-0 items-start pl-[13px]">
      <a href="#" class="flex h-[30px] w-[86px] items-center bg-[#3b4453] pl-[21px] pt-px font-bold text-white [clip-path:polygon(12px_0,100%_0,calc(100%-12px)_100%,0_100%)]">Model</a>
      <a href="#" class="ml-[9px] flex h-[30px] items-center pt-px">A3rd</a>
      <svg class="ml-3 h-[30px] w-2.5"><path d="M1 25l8-20" stroke="#59606b" stroke-width="1.500"/></svg>
      <button aria-label="New layout" class="ml-3 flex h-[30px] items-center"><svg class="size-4"><path d="M8 0v16M0 8h16" stroke="#d8d8d8" stroke-width="3"/></svg></button>
      <svg class="ml-3 h-[30px] w-2.5"><path d="M1 25l8-20" stroke="#59606b" stroke-width="1.500"/></svg>
    </nav>

    <!-- Status bar -->
    <footer class="flex h-[30px] shrink-0 gap-[3px] px-[5px]">
      <div class="mr-0.5 flex-1 bg-[#3b4453]"></div>
      <button class="w-[59px] bg-[#3b4453]">MODEL</button>
      <div class="flex w-20 items-center bg-[#3b4453] pl-[5px]">
        <button aria-label="Grid"><svg class="size-5"><path d="M4.500 0v20M9.500 0v20M14.500 0v20M0 5.500h20M0 10.500h20M0 15.500h20" stroke="#d0d0d0"/></svg></button>
        <button aria-label="Snap" class="ml-3"><svg class="size-4"><path d="M2 0v15M8 0v15M14 0v15" stroke="#d8d8d8" stroke-width="3" stroke-dasharray="3 3"/></svg></button>
        <svg class="ml-3 h-[5px] w-2.5"><use href="#caret"/></svg>
      </div>
      <button aria-label="Dynamic input" class="w-[30px] bg-[#3b4453] pl-[5px]"><svg class="size-5"><path d="M5 2v10M0 7h9" stroke="#c8c8c8"/><path d="M7.500 12.500h12v5h-12z" stroke="#d0d0d0" fill="none"/><path d="M10 12h10v6H10z" fill="#d0d0d0"/></svg></button>
      <div class="-ml-0.5 flex w-[130px] items-center bg-[#3b4453] pl-[5px]">
        <button aria-label="Ortho"><svg class="size-5"><path d="M.5 0v19.500H20M.5 13.500h6v6" fill="none" stroke="#d0d0d0"/></svg></button>
        <button aria-label="Polar tracking" class="ml-2.5"><svg class="size-5"><circle cx="8.500" cy="11" r="7.500" fill="none" stroke="#b8b8b8"/><path d="M8 11h12M8 11L18 1" stroke="#b8b8b8"/></svg></button>
        <svg class="ml-2.5 h-[5px] w-2.5"><use href="#caret"/></svg>
        <button aria-label="Isometric drafting" class="ml-3"><svg class="size-5"><path d="M2 2l14 14" stroke="#b85a60"/><path d="M9.500 1v18" stroke="#4fa878"/><path d="M7.500 7.500h4v4h-4z" fill="#3b4453" stroke="#c8c8c8"/></svg></button>
        <svg class="ml-2 h-[5px] w-2.5"><use href="#caret"/></svg>
      </div>
      <div class="-ml-0.5 flex w-20 items-center bg-[#3b4453] pl-[5px]">
        <button aria-label="Object tracking"><svg class="size-5"><path d="M0 17.500h20M1 17L15 2" stroke="#a8a8a8"/><path d="M6 8h3v3H6z" fill="#e0e0e0"/></svg></button>
        <button aria-label="Object snap" aria-pressed="true" class="ml-1.5 flex h-7 w-7 items-center justify-center bg-[#5f8fc4]"><svg class="size-5"><path d="M6 2.500h13.500v16h-17V6" fill="none" stroke="#e8e8e8"/><path d="M.5.500h5v5h-5z" fill="none" stroke="#fff"/></svg></button>
        <svg class="ml-1.5 h-[5px] w-2.5"><use href="#caret"/></svg>
      </div>
      <div class="flex w-[132px] items-center bg-[#3b4453] pl-px">
        <button aria-label="Annotation visibility" aria-pressed="true" class="flex h-7 w-7 items-center justify-center bg-[#5f8fc4]"><svg class="size-5"><path d="M8 0c3 3 3 7 3 10l6 9c-3 0-5-1-6-3H6c-1 2-3 3-6 3l5-9c0-3 1-7 3-10z" fill="#fff"/><circle cx="16" cy="4" r="3" fill="none" stroke="#d8e8ff"/></svg></button>
        <button aria-label="Autoscale" class="ml-1.5"><svg class="size-5"><path d="M8 0c3 3 3 7 3 10l6 9c-3 0-5-1-6-3H6c-1 2-3 3-6 3l5-9c0-3 1-7 3-10z" fill="#d4d4d4"/><path d="M16 1l-4 5h3l-2 5 6-6h-3l1-4z" fill="#e8e8e8"/></svg></button>
        <button aria-label="Annotation scale" class="ml-2.5 flex items-center"><svg class="h-5 w-[18px]"><path d="M9 0c3 3 3 7 3 10l6 9c-3 0-5-1-6-3H7c-1 2-4 3-7 3l6-9c0-3 1-7 3-10z" fill="#d4d4d4"/></svg><span class="ml-2.5">1:1</span><svg class="ml-1 h-[5px] w-2.5"><use href="#caret"/></svg></button>
      </div>
      <button aria-label="Workspace" class="flex w-[50px] items-center gap-2.5 bg-[#3b4453] pl-[5px]"><svg class="size-5"><circle cx="10" cy="10" r="5.500" fill="none" stroke="#d8d8d8" stroke-width="4"/><path d="M10 0v4M10 16v4M0 10h4M16 10h4M3 3l3 3M14 14l3 3M17 3l-3 3M6 14l-3 3" stroke="#d8d8d8" stroke-width="4"/><circle cx="10" cy="10" r="3" fill="#3b4453"/></svg><svg class="h-[5px] w-2.5"><use href="#caret"/></svg></button>
      <button aria-label="Annotation monitor" class="-ml-0.5 flex w-[30px] items-center justify-center bg-[#3b4453]"><svg class="size-[19px]"><path d="M9.500 0v19M0 9.500h19" stroke="#d8d8d8" stroke-width="3"/></svg></button>
      <button aria-label="Isolate objects" class="flex w-[31px] items-center justify-center bg-[#3b4453]"><svg class="size-5"><path d="M.5 1.500h7v7h-7zM3.500 19.500h9l-4.500-8z" fill="none" stroke="#c8c8c8"/><circle cx="15" cy="9.500" r="4.500" fill="none" stroke="#c8c8c8"/></svg></button>
      <button aria-label="Graphics performance" class="flex w-[34px] items-center justify-center bg-[#3b4453]"><svg class="h-[26px] w-[26px]"><path d="M1 1h15l5 6v8H1z" fill="#2f65ad"/><path d="M1 15h9l4 7H1z" fill="#f5b820"/><path d="M6 0v13M0 6h13M16 1l5 6" stroke="#dce8f8"/><path d="M4.500 4.500h3v3h-3z" fill="#2f65ad" stroke="#fff"/><path d="M10 18l5 5 9-9" fill="none" stroke="#46b050" stroke-width="4"/></svg></button>
      <div class="flex w-[60px] items-center gap-2.5 bg-[#3b4453] pl-[5px]">
        <button aria-label="Clean screen"><svg class="h-4 w-5"><path d="M.5.5h19v14H.5z" fill="none" stroke="#c8c8c8"/><path d="M13 3h4v4zM3 8v4h4z" fill="#e0e0e0"/><path d="M12 7l4-4M3 12l4-4" stroke="#e0e0e0"/></svg></button>
        <button aria-label="Customization"><svg class="size-5"><path d="M0 2.500h20M0 10h20M0 17.500h20" stroke="#d8d8d8" stroke-width="2"/></svg></button>
      </div>
    </footer>
  </div>
</body>
</html>
